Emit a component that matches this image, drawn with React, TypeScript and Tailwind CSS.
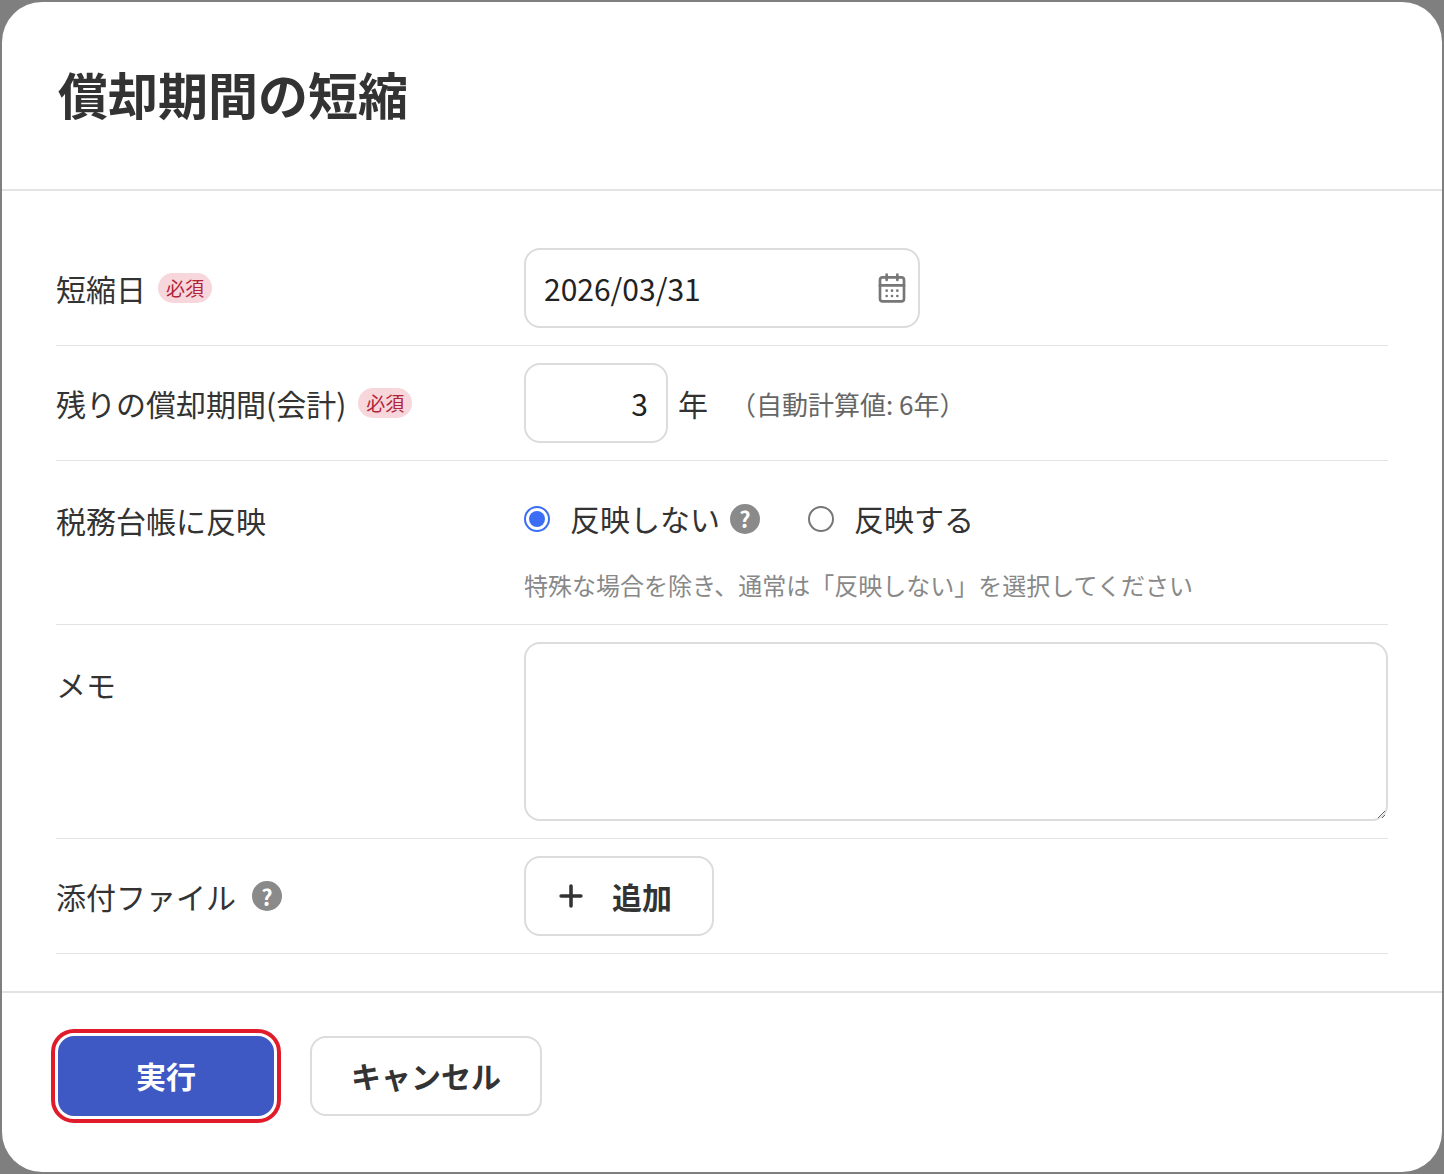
import { CalendarDays, Plus } from "lucide-react"

const font = { fontFamily: '"Noto Sans CJK JP", "Noto Sans", sans-serif' }

function Required() {
  return (
    <span className="ml-3 inline-flex items-center rounded-full bg-[#f7d6dc] px-2 h-[30px] text-[19px] text-[#b0243a]">
      必須
    </span>
  )
}

function Help() {
  return (
    <span className="inline-flex h-[30px] w-[30px] items-center justify-center rounded-full bg-[#8a8a8a] text-[22px] font-bold text-white">
      ?
    </span>
  )
}

function Row({ label, children, top = false }: { label: React.ReactNode; children: React.ReactNode; top?: boolean }) {
  return (
    <div className={`flex border-b border-[#e3e3e3] py-[17px] ${top ? "items-start" : "items-center"}`}>
      <div className={`flex w-[468px] shrink-0 items-center text-[30px] text-[#333] ${top ? "pt-[20px]" : ""}`}>{label}</div>
      <div className="flex-1">{children}</div>
    </div>
  )
}

export default function App() {
  return (
    <div className="h-[1174px] w-[1444px] bg-[#7f7f7f] p-[2px]" style={font}>
      <div className="flex h-full flex-col rounded-[40px] bg-white">
        <div className="flex h-[189px] items-center border-b-2 border-[#e3e3e3] px-[56px] pb-[4px]">
          <h1 className="text-[50px] font-bold text-[#333]">償却期間の短縮</h1>
        </div>

        <div className="px-[54px] pt-[40px]">
          <Row label={<>短縮日<Required /></>}>
            <div className="flex h-[80px] w-[396px] items-center justify-between rounded-[16px] border-2 border-[#dcdcdc] pl-[18px] pr-[10px] text-[30px] text-[#222]">
              2026/03/31
              <CalendarDays size={32} className="text-[#777]" />
            </div>
          </Row>
          <Row label={<>残りの償却期間(会計)<Required /></>}>
            <div className="flex items-center">
              <div className="flex h-[80px] w-[144px] items-center justify-end rounded-[16px] border-2 border-[#dcdcdc] pr-[18px] text-[30px] text-[#222]">
                3
              </div>
              <span className="ml-[10px] text-[30px] text-[#333]">年</span>
              <span className="ml-[22px] text-[26px] text-[#666]">（自動計算値: 6年）</span>
            </div>
          </Row>
          <Row label="税務台帳に反映" top>
            <div className="flex items-center pt-[18px] text-[30px] text-[#333]">
              <span className="flex h-[26px] w-[26px] items-center justify-center rounded-full border-2 border-[#3b6ef5]">
                <span className="h-[16px] w-[16px] rounded-full bg-[#3b6ef5]" />
              </span>
              <span className="ml-[20px] mr-[10px]">反映しない</span>
              <Help />
              <span className="ml-[48px] h-[26px] w-[26px] rounded-full border-2 border-[#777]" />
              <span className="ml-[20px]">反映する</span>
            </div>
            <p className="mt-[26px] pb-[4px] text-[24px] text-[#888]">
              特殊な場合を除き、通常は「反映しない」を選択してください
            </p>
          </Row>
          <Row label="メモ" top>
            <textarea className="block h-[179px] w-full rounded-[16px] border-2 border-[#dcdcdc]" />
          </Row>
          <Row label={<><span className="mr-4">添付ファイル</span><Help /></>}>
            <button className="flex h-[80px] w-[190px] items-center gap-[24px] rounded-[16px] border-2 border-[#dcdcdc] pl-[28px] text-[30px] font-bold text-[#333]">
              <Plus size={34} strokeWidth={2.5} />
              追加
            </button>
          </Row>
        </div>

        <div className="mt-[37px] flex flex-1 items-center gap-[36px] border-t-2 border-[#e3e3e3] px-[56px] pb-[14px]">
          <button className="h-[80px] w-[216px] rounded-[16px] bg-[#3f59c4] text-[30px] font-bold text-white outline-4 outline-offset-[3px] outline-[#e01b2a]">
            実行
          </button>
          <button className="h-[80px] w-[232px] rounded-[16px] border-2 border-[#dcdcdc] text-[30px] font-bold text-[#333]">
            キャンセル
          </button>
        </div>
      </div>
    </div>
  )
}
